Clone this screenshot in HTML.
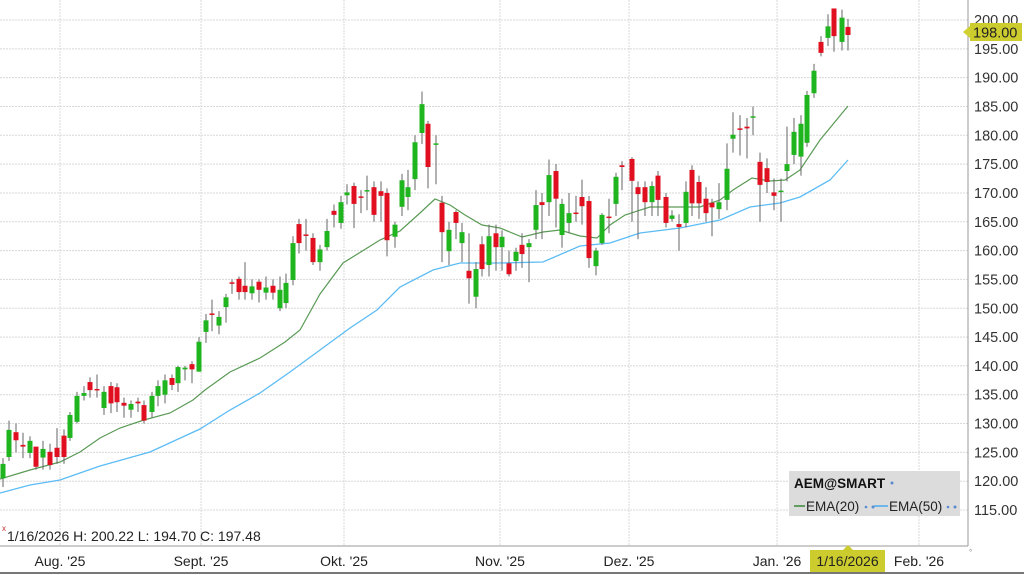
<!DOCTYPE html>
<html><head><meta charset="utf-8"><style>
body{margin:0;background:#fff;width:1024px;height:575px;overflow:hidden;font-family:"Liberation Sans",sans-serif}
svg{position:absolute;left:0;top:0}
</style></head><body>
<svg id="s" width="1024" height="575" xmlns="http://www.w3.org/2000/svg" font-family="Liberation Sans, sans-serif"></svg>
<script>
const s=document.getElementById('s');
const Y=p=>20+(200-p)*5.765;
let h='';
// horizontal grid
for(let p=115;p<=200;p+=5){const y=Y(p);h+=`<line x1="0" y1="${y}" x2="968" y2="${y}" stroke="#d8d8d8" stroke-width="1" stroke-dasharray="2,1"/>`;
h+=`<text x="974" y="${y+5}" font-size="14.5" fill="#333">${p.toFixed(2)}</text>`;}
// vertical grid
[60,201,344,500,629,777,919].forEach(x=>{h+=`<line x1="${x}" y1="0" x2="${x}" y2="546" stroke="#d8d8d8" stroke-dasharray="2,1"/>`});
// EMA lines
const e20=[[0,479],[30,470],[60,462],[80,452],[100,438],[120,428],[144,420],[170,413],[193,400],[205,390],[230,372],[260,358],[285,342],[300,330],[320,294],[343,263],[380,240],[400,231],[420,213],[435,199],[450,205],[465,215],[482,225],[500,228],[522,237],[543,232],[560,230],[580,236],[597,238],[610,225],[625,215],[650,207],[670,207],[700,207],[720,200],[733,190],[752,178],[770,181],[785,180],[800,170],[820,140],[848,106]];
const e50=[[0,493],[30,485],[60,480],[100,466],[150,452],[200,429],[230,410],[260,393],[290,372],[320,350],[350,328],[377,310],[400,287],[433,270],[460,263],[500,263],[543,262],[580,246],[610,243],[640,233],[680,228],[720,220],[750,207],[780,203],[800,197],[830,180],[848,160]];
h+=`<polyline points="${e50.join(' ')}" fill="none" stroke="#5cbcf5" stroke-width="1.3"/>`;
h+=`<polyline points="${e20.join(' ')}" fill="none" stroke="#5a9a55" stroke-width="1.2"/>`;
// candles [x,O,C,H,L]
const d=[[3,120.5,123,124,119],[9,124.2,128.9,130.5,123.5],[16,128.5,127.1,130,125],[23,126.3,126,128.4,124],[30,124.9,127,127.8,124],[36,126,122.5,125.5,122],[43,124.1,125.6,127,122],[50,125.1,122.8,126.5,122],[57,125.8,124.2,129.2,123],[64,127.9,124.2,129,123],[70,127.5,131.5,132,127],[77,130.3,134.8,135.5,130],[84,134.8,135.3,136.5,134],[90,137.2,135.8,138,134.5],[97,136,135.9,138.5,134.5],[104,132.7,135.5,136.5,131.5],[111,136.5,133.5,137.2,131.8],[117,136.3,133.7,137,132],[124,133.6,133.1,134.5,131],[131,132.4,133.4,134,131],[138,133.8,133.5,134.5,132],[144,133.2,130.5,134,130],[152,132,134.8,135.5,131],[158,134.8,136.5,137.5,133],[165,135,137.5,138.5,133.5],[172,137.9,136.7,138.5,135.8],[178,137,139.8,140,135.5],[185,139.4,139.7,140,137.5],[192,140.3,139.4,140.8,137],[199,139,144.2,145,139],[206,145.9,147.9,149,144],[212,149.1,149,151.5,146],[219,147,148.5,149.5,145.5],[226,150.2,151.9,152.5,147.5],[232,154.5,154.3,155,152.5],[239,155.1,152.8,155.5,151.5],[245,153.9,152.8,158,151.5],[252,152.6,153.8,155,151.5],[259,154.6,153.2,155,151],[266,152.7,153.6,155.5,151.5],[273,153.9,152.7,155,151.5],[280,150,153.2,155.5,149.5],[286,150.9,154.4,156,150],[293,154.9,161.3,162.5,154],[299,164.6,161.3,165.5,159.5],[306,162.8,162.6,165.5,160],[313,162.2,158,163,157.5],[320,158,160.2,161,156.5],[327,160.6,163.4,165.5,160],[334,166.9,166.2,168,164],[341,164.8,168.4,169.5,163.8],[347,169.6,170.1,171.5,168],[354,171.2,168.1,171.8,163.9],[361,169.4,169.2,170.5,166.5],[367,170.3,170.5,173,167],[374,171,166.2,172,165],[381,170.3,169.5,172,165],[387,170,161.8,170.8,159],[395,162.4,164.5,165,160.5],[402,167.6,172.2,173.3,166],[408,169.3,171,174,167],[415,172.4,178.8,180,170.5],[422,180.4,185.4,187.6,178.5],[428,182,174.5,182.5,170.8],[436,178.4,178.6,180,171.5],[442,168.3,163.2,169.5,158],[449,159.9,163.6,165,157.5],[456,166.7,164.8,167,162],[462,161.3,163.2,164.8,158],[469,156.5,155.2,163,150.8],[476,152,156.8,158,150],[482,161.1,156.8,162.5,155.5],[489,157.5,162.5,164.5,155.5],[496,163,160.6,164.5,156.5],[502,160.6,162.4,163.5,156.5],[509,157.8,155.9,160,155.5],[516,158.2,159.8,160.5,156.5],[522,161,159.4,163,157],[529,160.6,161.3,162,154.5],[536,163.6,167.9,170.5,162],[542,168.4,167.9,170,162],[549,168.4,173.1,175.8,166],[556,173.8,169,175,164],[562,162.7,168.1,169,160.5],[569,164.8,166.5,170,163],[576,166.6,166.4,169.5,165],[582,169.3,167.7,172.3,164.5],[589,168.6,158.7,169.5,157],[596,157.3,160,160.5,155.7],[602,161.3,166.2,166.5,161],[609,165.9,165.7,169,163],[616,168.1,172.8,173.5,166],[622,174.8,174.5,175.5,170.5],[632,175.9,172.1,176.2,165],[638,171,169.8,172,162],[645,171,168.4,172,166],[652,168.4,171.2,172,166],[658,173,168.8,173.8,166],[666,169.3,164.8,170,164],[672,165.5,166.1,167,165],[679,164.6,164.1,166.3,160],[686,164.8,170.2,172,164],[692,174,168.2,174.8,166],[699,171.9,168.2,173,165.5],[706,169,166.5,171,165],[712,168.3,167.5,169,162.5],[719,167.2,168.4,171.7,165.5],[727,168.8,174.2,178.6,167],[733,179.4,180.1,184,177],[740,181.2,181,183.5,176.5],[747,181.5,181.2,183,176],[753,183.1,183.3,185,180],[760,175.4,171.4,177,165],[767,174.3,171.9,176,170],[774,170.1,169.5,172.5,167],[781,170.2,170.4,172.5,165],[787,173.8,175,181.5,172],[794,176.6,180.6,183,175],[801,176.3,182,183.5,173],[807,178.7,187,187.7,178],[814,187.3,191.2,192.4,186.5],[821,196.2,194.3,197.2,193.7],[828,196.9,198.9,201,195.5],[834,202,197.2,202,194.5],[842,196.2,200.4,201.8,194.7],[848,198.8,197.4,200.2,194.7]];
d.forEach(([x,o,c,hi,lo])=>{const g=c>=o;const col=g?'#1fb51f':'#e01020';
h+=`<line x1="${x}" y1="${Y(hi)}" x2="${x}" y2="${Y(lo)}" stroke="#666" stroke-width="1"/>`;
const t=Y(Math.max(o,c)),b=Y(Math.min(o,c));h+=`<rect x="${x-2.5}" y="${t}" width="5" height="${Math.max(b-t,1.5)}" fill="${col}"/>`;});
// axes
h+=`<line x1="968" y1="0" x2="968" y2="546" stroke="#999"/>`;
h+=`<line x1="0" y1="546" x2="968" y2="546" stroke="#999"/>`;
h+=`<line x1="0" y1="573" x2="1024" y2="573" stroke="#777" stroke-width="2"/>`;
// price highlight
h+=`<polygon points="963,32 970,26 970,38" fill="#d0d030"/><rect x="970" y="23" width="52" height="18" fill="#cccc2e"/><text x="973" y="37.5" font-size="14.5" fill="#222">198.00</text>`;
// legend
h+=`<rect x="789" y="471" width="171" height="45" fill="#dcdcdc"/><text x="794" y="488" font-size="13.5" font-weight="bold" fill="#111">AEM@SMART</text><circle cx="892" cy="483" r="1.5" fill="#5a8ad0"/>`;
h+=`<line x1="794" y1="506" x2="805" y2="506" stroke="#3a8a3a" stroke-width="1.5"/><text x="806" y="511" font-size="13.5" fill="#222">EMA(20)</text><circle cx="866" cy="507" r="1.3" fill="#5a8ad0"/><circle cx="873" cy="507" r="1.5" fill="#5a8ad0"/><line x1="874" y1="506" x2="888" y2="506" stroke="#4aa8ee" stroke-width="1.5"/><text x="889" y="511" font-size="13.5" fill="#222">EMA(50)</text><circle cx="948" cy="507" r="1.3" fill="#5a8ad0"/><circle cx="955" cy="507" r="1.5" fill="#5a8ad0"/>`;
// info
h+=`<text x="2" y="531" font-size="8" fill="#c03030">x</text><text x="7" y="541" font-size="14" fill="#222">1/16/2026 H: 200.22 L: 194.70 C: 197.48</text>`;
// x labels
[["Aug. '25",60],["Sept. '25",201],["Okt. '25",344],["Nov. '25",500],["Dez. '25",629],["Jan. '26",777],["Feb. '26",919]].forEach(([t,x])=>{h+=`<text x="${x}" y="566" font-size="14" fill="#222" text-anchor="middle">${t}</text>`});
h+=`<polygon points="848,545 843,550 853,550" fill="#cccc2e"/><rect x="810" y="550" width="75" height="22" fill="#cccc2e"/><text x="847.5" y="566" font-size="14" fill="#222" text-anchor="middle">1/16/2026</text>`;
h+=`<text x="969" y="555" font-size="8" fill="#888">°</text>`;
s.innerHTML=h;
</script>
</body></html>
